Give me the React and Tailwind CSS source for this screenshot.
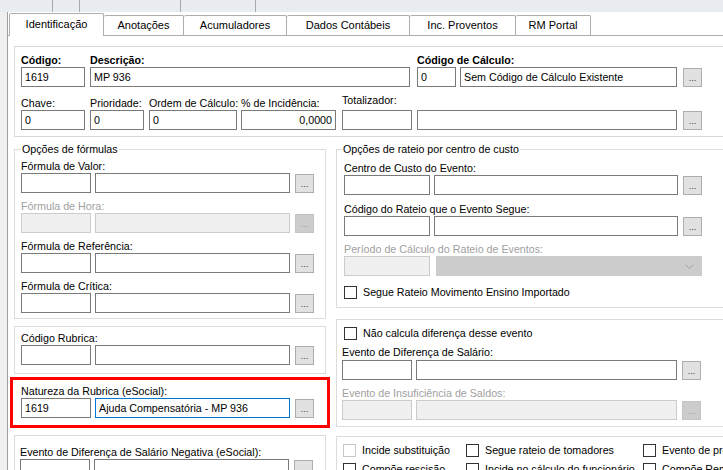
import React from 'react';
import clsx from 'clsx';

const Label = ({ children, bold, disabled, className }) => (
  <div
    className={clsx(
      'text-[10.7px] leading-[13px] whitespace-nowrap',
      bold && 'font-bold',
      disabled ? 'text-[#a0a0a0]' : 'text-black',
      className
    )}
  >
    {children}
  </div>
);

const Field = ({ className, children, disabled, focus, right }) => (
  <div
    className={clsx(
      'h-[20px] shrink-0 border flex items-center px-[3px] text-[10.7px] leading-none whitespace-nowrap overflow-hidden',
      disabled ? 'border-[#cccccc] bg-[#f0f0f0]' : focus ? 'border-[#0078d7] bg-white' : 'border-[#7a7a7a] bg-white',
      right && 'justify-end',
      className
    )}
  >
    {children}
  </div>
);

const Dots = ({ disabled, className }) => (
  <div
    className={clsx(
      'w-[19px] h-[19px] shrink-0 border flex items-end justify-center pb-[3px] text-[9px] leading-none',
      disabled ? 'bg-[#cccccc] border-[#c4c4c4] text-[#9a9a9a]' : 'bg-[#e1e1e1] border-[#adadad] text-[#333333]',
      className
    )}
  >
    ...
  </div>
);

const Check = ({ children, disabled, className }) => (
  <div className={clsx('flex items-center whitespace-nowrap', className)}>
    <div className={clsx('w-[13px] h-[13px] shrink-0 border bg-white', disabled ? 'border-[#c8c8c8]' : 'border-[#333333]')} />
    <span className="ml-[6px] text-[10.7px] leading-[13px]">{children}</span>
  </div>
);

// campo com código + descrição + botão de busca (coluna esquerda)
const LookupLeft = ({ code, desc, focus }) => (
  <div className="flex items-end">
    <Field className="w-[70px]">{code}</Field>
    <Field className="w-[195px] ml-[4px]" focus={focus}>{desc}</Field>
    <Dots className="ml-[5px]" />
  </div>
);

const tabs = [
  { name: 'Identificação', w: 'w-[95px] border-l', active: true },
  { name: 'Anotações', w: 'w-[80px]' },
  { name: 'Acumuladores', w: 'w-[103px]' },
  { name: 'Dados Contábeis', w: 'w-[123px]' },
  { name: 'Inc. Proventos', w: 'w-[106px]' },
  { name: 'RM Portal', w: 'w-[75px]' },
];

export default function App() {
  return (
    <div className="w-[723px] h-[470px] overflow-hidden bg-white flex flex-col font-['Liberation_Sans',Arial,sans-serif] text-[11px] text-black">
      {/* faixa superior */}
      <div className="h-[12px] shrink-0 bg-[#e9ecf0] flex">
        <div className="w-[53px] border-r border-[#a9a9a9]" />
        <div className="w-[27px] border-r border-[#a9a9a9]" />
        <div className="w-[101px] border-r border-[#a9a9a9]" />
        <div className="w-[75px] border-r border-[#a9a9a9]" />
      </div>

      <div className="flex flex-1 min-h-0">
        <div className="w-[8px] shrink-0 bg-[#f0f0f0] border-r border-[#a0a0a0]" />

        <div className="flex-1 flex flex-col min-w-0">
          {/* abas */}
          <div className="h-[23px] shrink-0 flex items-end pl-[1px]">
            {tabs.map((t) => (
              <div
                key={t.name}
                className={clsx(
                  'shrink-0 flex items-center justify-center border-t border-r border-[#adadad] rounded-t-[2px] bg-white text-[11px]',
                  t.w,
                  t.active ? 'h-[23px] -mb-[1px] relative z-10 pb-[2px]' : 'h-[20px]'
                )}
              >
                {t.name}
              </div>
            ))}
          </div>

          <div className="flex-1 border-t border-[#adadad] pl-[6px] pt-[10px]">
            {/* identificação */}
            <div className="w-[720px] border border-[#d9d9d9] pl-[6px] pt-[7px] pb-[6px]">
              <div className="flex items-end">
                <div className="w-[64px] shrink-0">
                  <Label bold>Código:</Label>
                  <Field className="w-full">1619</Field>
                </div>
                <div className="w-[320px] shrink-0 ml-[5px]">
                  <Label bold>Descrição:</Label>
                  <Field className="w-full">MP 936</Field>
                </div>
                <div className="ml-[7px] shrink-0">
                  <Label bold>Código de Cálculo:</Label>
                  <div className="flex items-end">
                    <Field className="w-[39px]">0</Field>
                    <Field className="w-[217px] ml-[4px]">Sem Código de Cálculo Existente</Field>
                    <Dots className="ml-[6px]" />
                  </div>
                </div>
              </div>

              <div className="flex items-end mt-[7px]">
                <div className="w-[64px] shrink-0">
                  <Label>Chave:</Label>
                  <Field className="w-full">0</Field>
                </div>
                <div className="w-[54px] shrink-0 ml-[5px]">
                  <Label>Prioridade:</Label>
                  <Field className="w-full">0</Field>
                </div>
                <div className="w-[88px] shrink-0 ml-[5px]">
                  <Label>Ordem de Cálculo:</Label>
                  <Field className="w-full">0</Field>
                </div>
                <div className="w-[95px] shrink-0 ml-[4px]">
                  <Label>% de Incidência:</Label>
                  <Field className="w-full" right>0,0000</Field>
                </div>
                <div className="w-[70px] shrink-0 ml-[6px]">
                  <Label className="mb-[3px]">Totalizador:</Label>
                  <Field className="w-full" />
                </div>
                <Field className="w-[260px] ml-[5px]" />
                <Dots className="ml-[6px]" />
              </div>
            </div>

            <div className="flex">
              {/* coluna esquerda */}
              <div className="w-[312px] shrink-0 flex flex-col">
                <fieldset className="mt-[6px] border border-[#dcdcdc] pl-[6px] pt-[4px] pb-[5px]">
                  <legend className="px-[1px] leading-[13px] text-[10.7px]">Opções de fórmulas</legend>
                  <Label>Fórmula de Valor:</Label>
                  <LookupLeft />
                  <Label disabled className="mt-[7px]">Fórmula de Hora:</Label>
                  <div className="flex items-end">
                    <Field className="w-[70px]" disabled />
                    <Field className="w-[195px] ml-[4px]" disabled />
                    <Dots className="ml-[5px]" disabled />
                  </div>
                  <Label className="mt-[7px]">Fórmula de Referência:</Label>
                  <LookupLeft />
                  <Label className="mt-[7px]">Fórmula de Crítica:</Label>
                  <LookupLeft />
                </fieldset>

                <div className="mt-[7px] border border-[#dcdcdc] pl-[6px] pt-[5px] pb-[8px]">
                  <Label>Código Rubrica:</Label>
                  <LookupLeft />
                </div>

                <div className="mt-[3px] -mx-[4px] border-[3px] border-[#ff0000] pl-[8px] pt-[5px] pb-[7px]">
                  <Label>Natureza da Rubrica (eSocial):</Label>
                  <LookupLeft code="1619" desc="Ajuda Compensatória - MP 936" focus />
                </div>

                <div className="mt-[7px] border border-[#dcdcdc] pl-[5px] pt-[10px] pb-[8px]">
                  <Label>Evento de Diferença de Salário Negativa (eSocial):</Label>
                  <LookupLeft />
                </div>
              </div>

              {/* coluna direita */}
              <div className="w-[400px] shrink-0 ml-[10px] flex flex-col">
                <fieldset className="mt-[6px] border border-[#dcdcdc] pl-[7px] pt-[6px] pb-[8px]">
                  <legend className="-ml-[2px] px-[1px] leading-[13px] text-[10.7px]">Opções de rateio por centro de custo</legend>
                  <Label>Centro de Custo do Evento:</Label>
                  <div className="flex items-end">
                    <Field className="w-[86px]" />
                    <Field className="w-[244px] ml-[4px]" />
                    <Dots className="ml-[5px]" />
                  </div>
                  <Label className="mt-[8px]">Código do Rateio que o Evento Segue:</Label>
                  <div className="flex items-end">
                    <Field className="w-[86px]" />
                    <Field className="w-[244px] ml-[4px]" />
                    <Dots className="ml-[5px]" />
                  </div>
                  <Label disabled className="mt-[7px]">Período de Cálculo do Rateio de Eventos:</Label>
                  <div className="flex items-end">
                    <Field className="w-[86px]" disabled />
                    <div className="w-[266px] h-[20px] ml-[6px] bg-[#cccccc] border border-[#cccccc] flex items-center justify-end pr-[7px]">
                      <svg width="9" height="5" viewBox="0 0 9 5">
                        <polyline points="0.5,0.5 4.5,4.5 8.5,0.5" fill="none" stroke="#a6a6a6" strokeWidth="1" />
                      </svg>
                    </div>
                  </div>
                  <Check className="mt-[10px]">Segue Rateio Movimento Ensino Importado</Check>
                </fieldset>

                <div className="mt-[11px] border border-[#dcdcdc] pl-[5px] pt-[7px] pb-[6px]">
                  <Check className="ml-[2px]">Não calcula diferença desse evento</Check>
                  <Label className="mt-[6px]">Evento de Diferença de Salário:</Label>
                  <div className="flex items-end mt-[1px]">
                    <Field className="w-[70px]" />
                    <Field className="w-[261px] ml-[4px]" />
                    <Dots className="ml-[5px]" />
                  </div>
                  <Label disabled className="mt-[7px]">Evento de Insuficiência de Saldos:</Label>
                  <div className="flex items-end">
                    <Field className="w-[70px]" disabled />
                    <Field className="w-[261px] ml-[4px]" disabled />
                    <Dots className="ml-[5px]" disabled />
                  </div>
                </div>

                <div className="mt-[9px] border border-[#dcdcdc] pl-[6px] pt-[7px] pb-[6px]">
                  <div className="flex">
                    <Check disabled className="w-[123px] shrink-0">Incide substituição</Check>
                    <Check className="w-[177px] shrink-0">Segue rateio de tomadores</Check>
                    <Check className="shrink-0">Evento de provisão</Check>
                  </div>
                  <div className="flex mt-[6px]">
                    <Check className="w-[123px] shrink-0">Compõe rescisão</Check>
                    <Check className="w-[177px] shrink-0">Incide no cálculo do funcionário</Check>
                    <Check className="shrink-0">Compõe Remuneração</Check>
                  </div>
                </div>
              </div>
            </div>
          </div>
        </div>
      </div>
    </div>
  );
}
